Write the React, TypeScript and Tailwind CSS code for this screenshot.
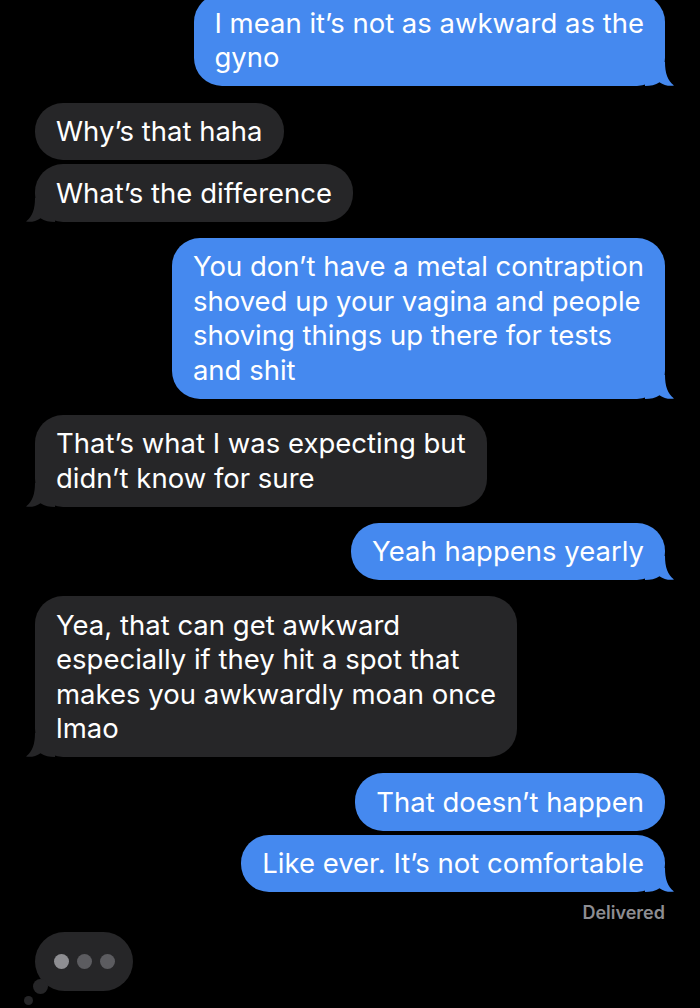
import React from "react";

const BLUE = "bg-[#4589ef]";
const GRAY = "bg-[#262628]";

function Tail(props: { me: boolean }) {
  const me = props.me;
  return (
    <svg
      width="30"
      height="24"
      viewBox="0 0 30 24"
      className={
        me
          ? "absolute bottom-0 right-[-10px]"
          : "absolute bottom-0 left-[-10px] -scale-x-100"
      }
    >
      <path
        d="M0 24 L0 0 L20 0 C20 11 22.5 18.5 29 23.6 C24 24.4 18.5 23.2 14.5 20.2 C10.5 23 5.5 24 0 24 Z"
        fill={me ? "#4589ef" : "#262628"}
      />
    </svg>
  );
}

function Bubble(props: { me?: boolean; tail?: boolean; lines: string[]; className?: string }) {
  const me = !!props.me;
  return (
    <div className={"flex w-full " + (me ? "justify-end" : "justify-start") + " " + (props.className || "")}>
      <div
        className={
          "relative rounded-[28px] px-[21px] py-[11.5px] text-white text-[27.5px] leading-[34.5px] whitespace-nowrap " +
          (me ? BLUE : GRAY)
        }
      >
        {props.lines.map((l, i) => (
          <div key={i}>{l}</div>
        ))}
        {props.tail && <Tail me={me} />}
      </div>
    </div>
  );
}

export default function App() {
  return (
    <div
      className="w-[700px] h-[1008px] bg-black overflow-hidden px-[35px] flex flex-col"
      style={{ fontFamily: "Inter, 'Liberation Sans', sans-serif" }}
    >
      <Bubble me tail lines={["I mean it’s not as awkward as the", "gyno"]} className="mt-[-6px]" />

      <Bubble lines={["Why’s that haha"]} className="mt-[16.5px]" />
      <Bubble tail lines={["What’s the difference"]} className="mt-[4px]" />

      <Bubble
        me
        tail
        lines={[
          "You don’t have a metal contraption",
          "shoved up your vagina and people",
          "shoving things up there for tests",
          "and shit",
        ]}
        className="mt-[16px]"
      />

      <Bubble
        tail
        lines={["That’s what I was expecting but", "didn’t know for sure"]}
        className="mt-[16px]"
      />

      <Bubble me tail lines={["Yeah happens yearly"]} className="mt-[16px]" />

      <Bubble
        tail
        lines={[
          "Yea, that can get awkward",
          "especially if they hit a spot that",
          "makes you awkwardly moan once",
          "lmao",
        ]}
        className="mt-[16px]"
      />

      <Bubble me lines={["That doesn’t happen"]} className="mt-[16px]" />
      <Bubble me tail lines={["Like ever. It’s not comfortable"]} className="mt-[4px]" />

      <div className="flex justify-end mt-[8px] text-[18px] font-semibold text-[#8d8d92] leading-[26px]">
        Delivered
      </div>

      <div className="relative mt-[6px] w-[98px] h-[59px]">
        <div className={"absolute inset-0 rounded-full flex items-center justify-center gap-[8px] " + GRAY}>
          <span className="w-[15px] h-[15px] rounded-full bg-[#8e8e92]" />
          <span className="w-[15px] h-[15px] rounded-full bg-[#5c5c60]" />
          <span className="w-[15px] h-[15px] rounded-full bg-[#5c5c60]" />
        </div>
        <span className={"absolute left-[-2px] bottom-[-3px] w-[15px] h-[15px] rounded-full " + GRAY} />
        <span className={"absolute left-[-11px] bottom-[-14px] w-[9px] h-[9px] rounded-full " + GRAY} />
      </div>
    </div>
  );
}
